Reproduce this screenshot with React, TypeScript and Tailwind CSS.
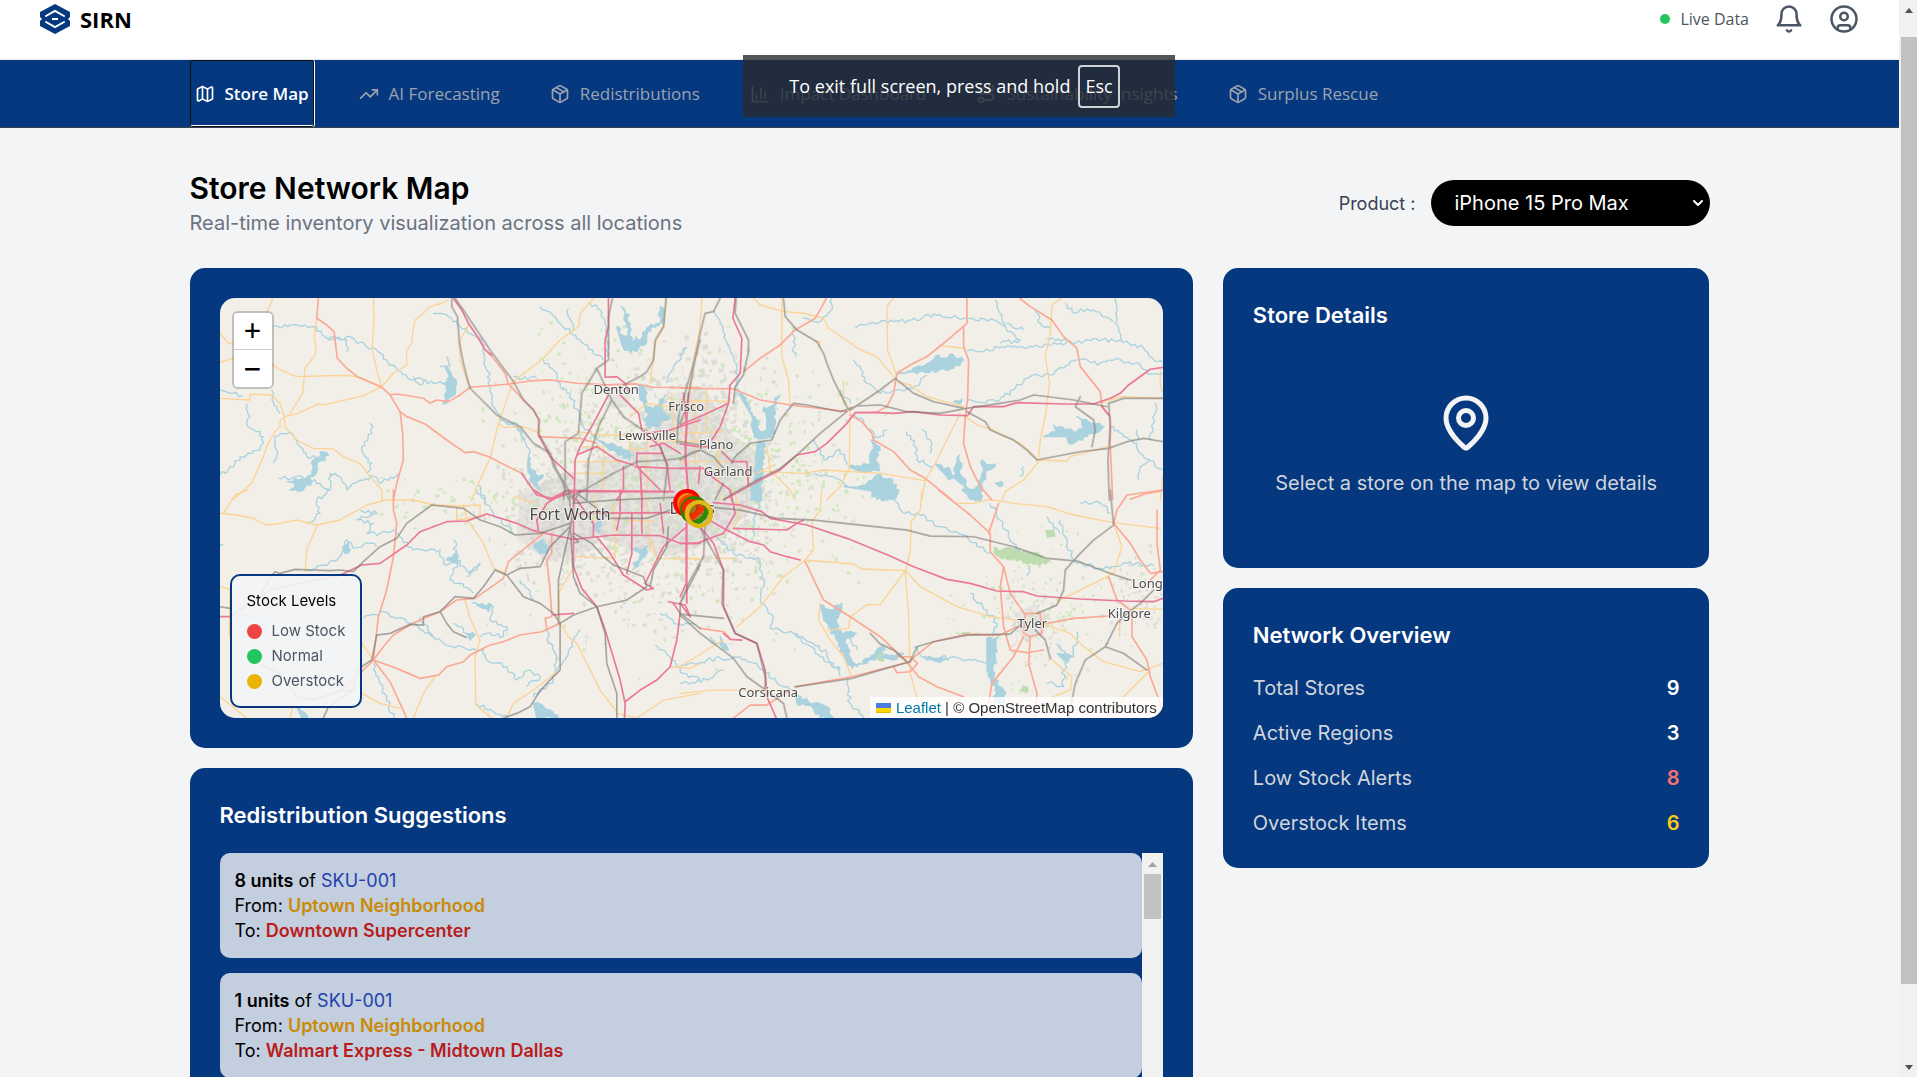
import type { ReactNode } from "react";
import { CircleUser, Map as MapIcon, MapPin, Package, Route, TrendingUp, ChartColumn, ChevronDown } from "lucide-react";

/* ------------------------------------------------------------------ */
/* Map drawing data: each sheet covers one quarter of the map at 3x    */
/* ------------------------------------------------------------------ */

type Sheet = {
  x: number;
  y: number;
  minor: string[];
  trunk: string[];
  motorway: string[];
  rail: string[];
  river: string[];
  lake: string[];
};

const sheets: Sheet[] = [
  {
    x: -40,
    y: -38,
    minor: [
      "278,115 262,155",
      "120,220 145,250 160,252",
      "120,307 160,295",
      "275,312 300,330 350,350 500,346 540,352 605,380",
      "410,175 403,230 408,270 405,285 375,325 368,400 327,466",
      "580,115 582,180 576,265 590,330 605,380",
      "805,120 785,130 750,140 725,165 705,180 698,215 695,250 680,270 680,315 640,340 605,380 550,408 430,435 415,432 350,462 313,470",
      "120,415 210,420 210,403 275,405 300,430 313,470 315,500 350,540 400,565 460,567 490,590 540,610 570,650 605,690 607,720",
      "313,470 300,485 300,500 285,515 260,560 250,590 215,670 160,718",
      "1240,115 1200,160 1195,200 1140,240 1090,295 1000,365 955,490 930,595 890,680 875,720",
      "865,195 840,240 840,300 870,385",
      "955,490 970,502 1030,500 1080,520",
      "1458,115 1450,200 1425,250 1410,370",
      "1190,515 1270,525 1350,525",
      "1205,560 1270,560 1270,690",
      "1190,605 1330,605",
      "1190,640 1270,640",
      "1345,520 1350,570 1400,565 1400,500",
      "1350,470 1400,430 1460,440 1560,425",
      "1400,540 1560,545",
      "1475,400 1480,560",
      "1400,590 1400,690",
    ],
    trunk: [
      "415,115 410,175 440,195 462,215 472,295 500,325 535,352 605,382 630,405 660,455 680,470 735,492 800,540 855,578 880,575 930,592 980,618 1025,640",
      "630,405 650,402 690,408 730,415 750,430 770,420 805,425 840,405 870,382 920,378 985,372 1050,363 1110,360 1190,370 1280,375 1370,372 1420,382 1560,383",
      "660,455 668,520 670,600 650,670 640,720",
      "915,270 940,295 975,340 985,372 1030,420 1060,450 1075,480 1075,525",
      "1075,530 1200,535 1250,550",
    ],
    motorway: [
      "820,115 845,150 865,190 895,235 915,270 935,285",
      "1285,115 1285,200 1275,240 1275,350",
      "1275,352 1310,350 1335,370 1345,395",
      "1285,405 1240,490 1200,560 1185,600 1182,720",
      "1320,405 1375,460 1385,510 1440,560 1460,610 1470,690",
      "1075,525 1110,590 1180,655",
      "1025,640 1045,670 1070,705 1115,715 1160,692 1480,695",
      "1190,585 1250,560 1310,600 1360,615",
      "1370,580 1370,620 1440,690",
      "1330,620 1330,690 1310,720",
      "1365,620 1470,625 1560,625",
      "1370,580 1450,580",
      "1525,400 1515,560 1525,720",
      "1560,480 1470,510 1400,520",
      "1380,620 1385,720",
      "1410,560 1450,550 1500,580",
    ],
    rail: [
      "815,115 815,140 832,170 838,250 850,310 860,350 870,385 950,465 1020,500 1060,550 1110,580 1120,620 1145,660 1165,718",
      "825,115 850,150 870,180 930,270 1000,365 1030,420 1060,450 1078,480 1075,520 1110,580 1130,630 1165,690 1180,718",
      "1297,115 1285,170 1285,300 1250,325 1230,360 1205,400 1195,520 1155,545 1155,680 1150,718",
      "1250,325 1295,420 1255,500 1240,550 1225,600 1220,720",
      "1458,115 1450,200 1425,240 1420,300 1400,335 1380,350 1330,375",
      "1295,420 1330,470 1380,505 1400,510",
      "1165,715 1230,680 1300,640 1370,605 1460,600 1500,595 1560,570",
      "1495,545 1560,555",
      "1560,240 1540,310 1520,380 1495,470 1490,550",
      "1440,560 1462,620 1450,720",
    ],
    river: [
      "280,200 340,195 400,200 440,235 520,235 560,262 590,270 620,300 690,360 730,360 760,370 800,365",
      "440,235 500,240 500,275",
      "760,160 800,165 840,200 905,240 915,300 930,360 935,430 960,480 1010,490 1030,540",
      "120,390 160,400 190,410",
      "200,430 210,470 200,490 250,530 240,570 180,590 160,620 120,645",
      "295,655 350,650 420,670 450,690 450,640 480,650 500,690 540,660 580,650 600,670 655,640",
      "1080,140 1130,180 1200,240 1240,280 1270,300",
      "1165,145 1165,170 1180,215",
      "1230,130 1260,150 1280,200 1280,290",
      "1090,300 1130,340 1140,380 1170,400 1210,500 1240,530",
      "570,490 575,520 545,560 555,590 575,610 560,640",
      "440,575 420,590 380,590 360,560 340,525 310,520 285,530 290,570 280,610",
      "275,390 275,420 290,440 300,460",
      "960,480 1020,510 1040,560 1050,600",
      "895,675 915,720",
      "1000,350 1070,355",
      "1460,370 1480,320 1520,265",
      "780,320 810,318 800,290",
      "700,350 720,375 740,360",
    ],
    lake: [
      "1310,200 1325,225 1345,225 1340,190 1325,140 1335,150 1350,190 1355,245 1385,235 1400,205 1440,190 1440,140 1452,160 1450,190 1420,200 1400,225 1400,245 1375,265 1350,278 1325,255",
      "1375,375 1395,390 1400,440 1420,450 1440,420 1455,405 1445,450 1470,475 1450,480 1435,500 1400,500 1390,480 1405,460 1380,420",
      "795,320 815,345 828,360 826,390 800,430 788,432 798,385 790,370 808,350",
      "1045,590 1055,630 1075,650 1090,645 1070,665 1080,690 1050,655 1042,620",
      "1235,525 1270,545 1300,550 1360,585 1350,600 1290,570",
      "420,575 446,585 410,615 405,645 385,650 395,665 370,690 330,690 355,675 320,665 395,648 400,600 425,595",
    ],
  },
  {
    x: -40,
    y: 192,
    minor: [
      "205,0 165,15 130,70",
      "120,70 170,75 220,85 260,105 300,100 350,90 412,105 480,90 560,45 620,30 700,30 760,45 850,48 900,45 900,80 830,90 830,50",
      "412,105 380,180 375,245",
      "850,45 860,85 910,160 940,235 975,250",
      "120,290 150,298 148,440",
      "855,330 870,385 900,450 885,500 887,640 900,655 935,684",
      "1140,400 1165,440 1190,460 1230,540 1260,600 1310,665",
      "700,684 730,610 765,560",
      "120,620 200,684",
      "330,684 350,600 350,490",
      "540,450 580,510",
      "545,610 600,640 660,655",
      "980,684 1000,640 1060,600 1130,545",
      "1310,670 1370,684 1450,630 1560,610",
      "1140,400 1135,310 1175,240",
      "1415,150 1430,205 1560,207",
      "1470,530 1530,535 1560,520",
      "1300,40 1305,205",
      "1245,0 1245,95",
      "1000,20 1070,40",
      "1190,200 1300,205",
      "1340,90 1420,95",
      "1400,20 1410,180",
    ],
    trunk: [
      "640,0 640,60 650,100 640,200 620,300 595,380 580,510",
      "580,510 540,550 470,610",
      "580,510 630,575 660,640 680,684",
      "580,510 650,535 720,565 775,555 800,530 850,515 870,495 930,465 970,455 1020,435 1085,425 1140,400",
      "580,510 610,470 640,435 690,405 730,385 780,365 830,330 885,325 970,265 985,215 1040,170 1090,130",
      "1115,130 1115,190 1100,210 1108,280 1115,370",
      "1115,380 1095,385 1100,415",
    ],
    motorway: [
      "120,380 150,380 270,300 400,272 470,260 545,225 600,220 680,165 720,125 800,95 860,93 920,72 1010,100 1060,122 1120,135 1180,148 1300,135 1440,137 1500,160 1560,160",
      "1180,0 1180,230 1205,295 1250,350 1275,420 1290,470 1320,570 1335,640 1333,684",
      "1335,635 1380,600 1430,570 1470,530 1490,450 1500,370 1480,340",
      "1115,375 1180,370",
      "1060,0 1110,30 1180,5 1480,5",
      "1190,70 1480,68",
      "1250,140 1290,190 1330,255 1400,300 1420,295 1395,280 1450,170 1520,110",
      "1075,120 1070,90 1100,40 1150,10",
      "1190,30 1240,100 1240,140",
      "1355,70 1355,190 1340,250",
      "1385,0 1385,130",
      "1320,0 1320,70 1310,120",
      "1440,40 1450,130",
      "1520,100 1520,340",
      "1465,335 1515,345 1530,380",
    ],
    rail: [
      "120,350 150,355",
      "240,320 265,270 285,245 300,250 345,238 400,240 450,242 480,240 520,245 555,210 600,170 650,145 680,100 755,45 850,55 900,90 960,110 1005,135 1080,130 1170,100",
      "430,684 445,650 520,600 530,540 575,510 590,435 630,430 690,403 730,405 730,380 780,365 825,320 880,325 910,290 945,240 980,255 1020,235 1080,230 1110,170 1170,110",
      "780,365 800,400 820,425 858,442",
      "945,240 980,255 1030,320 1080,340 1120,370 1140,400 1140,540 1100,580 1075,610 1050,650 1010,670 970,684",
      "1165,0 1175,90 1155,180 1135,270 1135,400",
      "1170,100 1180,260 1200,310 1250,350 1275,430 1280,520 1310,610 1310,684",
      "1180,130 1235,160 1270,200 1300,225 1390,260 1400,290 1340,330 1250,350 1180,375 1140,400",
      "1410,290 1420,240 1460,170 1465,110",
      "1560,225 1500,340 1500,370 1560,415",
      "1190,10 1290,85 1400,85 1470,60",
      "1200,0 1180,40 1300,30 1480,22",
      "1180,140 1195,155 1185,158",
      "240,520 300,550 350,620 400,630 470,605 520,600",
    ],
    river: [
      "540,60 590,70 530,90 580,100 560,130 600,130 640,120 700,180 780,180 790,220 830,220 810,270 840,280 880,310",
      "450,0 410,30 420,70 380,100",
      "890,0 940,70 1000,130",
      "380,240 430,225 480,200 490,180 500,150 520,175 570,160 590,170",
      "820,150 830,190 830,210 870,250 900,220 860,260",
      "550,385 610,365 690,400 760,440 790,460 870,480 910,480 920,510 980,530 1010,570 1050,540 1080,560 1040,590",
      "875,340 940,350 930,390 980,410 970,440 920,430 900,440",
      "580,520 600,580 620,620 640,684",
      "1100,420 1110,460 1130,500 1120,570 1060,620",
      "820,400 860,430 880,440",
      "1425,465 1470,500 1510,550 1560,570",
      "1440,370 1500,405 1545,405",
      "120,165 130,165",
      "1200,420 1130,545",
      "885,640 940,665 985,684",
      "170,370 240,390 260,440",
      "1020,270 1060,330",
      "720,380 760,440",
    ],
    lake: [
      "1360,180 1405,168 1375,230 1358,238 1380,190",
      "1060,640 1110,660 1135,684 1070,684",
      "1060,170 1090,150 1105,180 1080,190",
      "490,180 505,155 510,180 495,190",
      "800,210 830,180 835,220",
      "890,345 935,345 925,365 910,355",
      "350,650 385,684 365,682",
      "1240,110 1260,80 1255,130",
      "860,430 885,435 870,450",
    ],
  },
  {
    x: 460,
    y: -38,
    minor: [
      "220,115 240,135 310,155 370,160 430,175 445,205 490,235 540,270 590,290 615,320 640,350",
      "305,115 305,290 325,360 330,435",
      "638,115 620,140 622,270 640,320 650,350",
      "1145,115 1115,135 1110,220 1095,290 1108,370 1095,470 1080,540 1075,590",
      "785,258 850,265",
      "840,460 800,540 765,610 735,660 725,720",
      "640,365 690,375 740,410 850,440",
      "855,470 890,495 940,510 960,525 1020,550 1075,600 1160,603 1170,590 1285,560",
      "490,365 490,430",
      "510,440 507,625 480,680 440,720",
      "250,635 370,640 430,630 600,640 735,662",
      "1075,605 1030,660 975,695 965,720",
      "1440,330 1440,370 1445,395",
      "1260,430 1320,410 1448,415",
      "0,520 130,515",
      "80,390 80,510",
      "0,420 160,425",
      "0,605 150,605",
      "115,540 120,720",
      "260,560 270,630 330,690 345,720",
      "1448,645 1440,720",
      "40,430 45,600",
      "65,115 60,200 40,300 30,400",
      "400,245 420,245 415,265",
      "230,640 280,615",
    ],
    trunk: [
      "0,385 160,387 240,420 330,435 420,445 500,455",
      "438,115 420,150 405,175 345,210 300,255 240,295 190,335",
      "860,115 860,190 790,250 740,290 690,315 650,340 640,400 620,440 585,458",
      "850,200 850,260 865,300 862,420 855,470 850,550 870,620 900,680 935,720",
      "1018,115 1050,140 1115,180 1150,230 1190,265 1200,320 1260,395 1265,440 1290,470 1290,560 1297,720",
      "510,465 545,485 575,520 580,540 640,575 690,630 735,655 815,720",
      "1350,718 1400,700 1448,692",
    ],
    motorway: [
      "165,115 158,175 185,235 180,340 150,375 145,430 120,500 95,540",
      "0,495 70,465 145,430",
      "130,720 240,660 300,630 350,585 405,575 440,550 470,520 500,490 525,458 580,457 640,460 700,455 780,465 862,467 880,440 970,440 1010,428 1150,432 1240,432 1290,415 1320,400 1345,375 1410,328 1448,322",
      "10,400 20,500 15,600 25,700",
      "0,625 70,625 95,650 150,690 155,720",
      "0,552 50,560 85,560",
      "125,575 155,605 200,605 205,680",
      "60,620 55,670",
      "1265,440 1285,465",
    ],
    rail: [
      "120,115 100,155 75,160 60,220 35,350 20,440 0,490",
      "168,115 165,160 205,240 205,275 190,345 165,380 160,430",
      "310,115 315,170 350,210 410,245 430,280 440,310 460,360 505,450",
      "155,610 165,590 210,550 275,540 300,480 340,430 380,435 480,455 510,445 530,438 600,435 680,455 780,460 860,445 960,430 1020,420 1060,405 1180,420 1280,440",
      "510,450 600,390 645,355 700,400 760,425 850,445",
      "500,455 420,520 350,585 300,625 230,660 130,718",
      "860,455 915,485 930,510 1000,540 1040,570 1070,600 1200,575 1285,565 1340,545 1390,535 1448,545",
      "1200,410 1185,440 1240,480 1245,510 1235,560",
      "1285,430 1290,500 1283,600 1287,720",
      "1285,430 1330,415 1448,415",
      "0,600 30,580 60,570 100,590 130,625",
      "130,670 105,718",
    ],
    river: [
      "525,205 570,190 640,185 720,180 760,162 850,175 940,180 990,215 1020,240 960,250",
      "860,272 900,275 965,260 1040,265 1140,250 1230,242 1320,240 1390,265 1420,300 1448,305",
      "860,420 950,425 1000,390 1050,350 1110,345 1190,300 1260,310 1320,298 1380,315 1400,340 1448,340",
      "1155,130 1175,155 1240,150 1300,185",
      "1305,115 1305,190 1325,240",
      "100,150 120,190 140,250 150,270 170,320 170,400",
      "520,300 540,320 560,370 600,400 700,385 740,345",
      "0,285 20,262",
      "455,115 450,155 420,185 370,175",
      "340,210 345,290",
      "520,460 550,480 585,530",
      "680,515 705,560 710,600 760,620",
      "725,510 750,540 750,580",
      "1290,500 1330,530 1370,550 1380,580 1448,630",
      "1425,430 1420,490 1410,540",
      "1375,660 1380,620 1410,600",
      "945,120 960,160 975,200",
      "980,190 1030,210",
      "1065,150 1080,190 1110,205",
      "400,540 430,600 480,570 500,615",
      "400,640 480,660 500,680",
      "480,390 510,430",
      "1100,235 1160,240",
      "1370,510 1375,540",
      "1020,650 1030,620",
      "570,540 600,530 620,510",
    ],
    lake: [
      "650,342 725,320 765,290 790,295 810,282 850,300 820,325 780,328 740,338 700,335",
      "175,400 205,430 215,470 222,530 275,535 285,480 280,440 300,405 270,440 250,442 260,475 260,510 240,515 228,480 210,460",
      "232,550 255,550 245,600 250,640 245,690 245,720 210,720 215,690 225,640 225,600",
      "505,620 570,612 575,545 600,570 585,600 598,632 540,635",
      "490,680 560,672 590,645 630,655 655,690 640,718 590,718 560,690",
      "765,612 810,630 820,650 838,585 845,650 870,690 890,680 905,640 905,600 920,615 945,612 915,640 895,718 870,718 840,670 800,650",
      "1090,530 1130,515 1120,495 1180,515 1210,500 1190,470 1240,490 1270,500 1220,530 1165,550 1160,530",
      "820,425 845,418 840,432",
      "945,670 965,665 960,680",
    ],
  },
  {
    x: 460,
    y: 192,
    minor: [
      "425,0 420,60 395,95 400,180 375,210 350,230 310,260 240,350 170,410",
      "375,210 520,222 545,237 675,242 640,290 600,343 560,345 510,380 505,415 440,420",
      "725,0 720,60 693,95 690,180 675,250 685,370 688,500 690,550 715,640",
      "675,240 720,290 830,350 930,380 1010,390",
      "420,340 415,390 450,450 490,500 515,560",
      "830,40 880,40 925,28 1000,40 1100,50 1180,75 1300,98 1440,115",
      "1300,100 1325,170 1300,250 1240,280 1130,335",
      "1080,400 1170,430 1210,470 1270,515 1380,545 1448,520",
      "1110,505 1175,560 1170,600 1120,620 1100,684",
      "0,610 100,600 230,600 310,600",
      "1410,540 1330,620 1300,684",
      "0,530 80,480 130,450",
      "100,205 160,205",
      "160,0 180,60 160,120",
      "1318,440 1318,390",
      "0,205 60,205",
      "1355,355 1448,358",
    ],
    trunk: [
      "775,0 870,75 930,130 930,185 970,230 960,290 970,410 990,480 1040,488 1090,480",
      "955,40 925,130",
      "970,230 990,310 1035,375",
      "375,215 430,330 510,380 600,440 675,510 715,560 770,590 850,620",
      "345,590 515,560 630,530 690,515",
      "640,530 650,548 690,545 712,520 690,500 655,500",
      "690,510 760,455 860,433 960,435 1010,410",
      "1100,400 1180,385 1285,378",
      "1035,370 1030,430 1050,440 1085,430 1080,370 1035,370",
      "1030,440 1000,500 935,580 925,640",
      "1050,440 1045,520 1070,610 1065,684",
      "1300,100 1350,160 1380,210 1410,250 1448,245",
      "1430,60 1430,160 1440,240 1410,270",
      "1285,260 1310,330 1350,360",
      "1355,370 1355,440 1400,510 1410,560 1448,660",
      "60,415 130,425 150,445",
      "160,684 210,645 260,645 330,600",
      "1448,0 1340,15 1310,60 1300,100",
    ],
    motorway: [
      "70,80 130,115 210,155 250,165 270,185 320,200 360,210",
      "100,38 180,45 245,65 270,85 380,105 500,145 630,198 700,230 800,268 870,280 950,303 1030,305 1070,318 1200,327 1330,333 1420,335 1448,325",
      "60,110 100,160 130,240 130,350 165,430 230,460 255,540 260,620 288,684",
      "0,160 50,160 130,130 165,70 150,0",
      "160,115 320,120 350,100 370,90",
      "0,320 18,280 18,100",
      "0,340 30,380",
      "130,430 150,448 185,450",
    ],
    rail: [
      "100,52 180,60 290,85 400,90 520,103 680,120 750,138 880,140 1000,170 1100,205 1190,213 1290,250 1350,270",
      "1290,0 1300,105 1240,150 1200,190 1155,240 1150,300 1130,345 1070,370",
      "690,515 710,470 760,455 860,435 990,432 1020,405",
      "570,430 600,462 640,480 680,515",
      "345,590 515,565 600,540 690,515",
      "60,115 130,240 125,340 165,430 230,460 255,560 255,600",
      "75,100 70,200 30,270 0,340",
      "0,372 130,385",
      "0,375 60,430 160,505 200,560 250,595 310,640 320,684",
      "1065,420 1095,450 1110,505",
      "1420,300 1380,340 1340,370 1310,400 1275,470 1215,510 1185,580 1165,684",
      "1275,470 1330,490 1400,540",
    ],
    river: [
      "230,0 240,50 225,80 220,140",
      "110,140 160,190 240,210 250,290 240,330 280,380 270,415 340,430 400,460 440,490 480,560",
      "620,0 660,60 720,75 780,110 850,135 930,190",
      "930,40 960,90 1020,190",
      "1140,90 1160,160 1190,220 1260,235 1340,220 1420,225",
      "700,470 740,510 820,500 920,520",
      "870,310 920,360 950,400 940,440",
      "1190,425 1180,490 1150,540 1150,590 1100,580",
      "0,530 80,510 180,500 250,540 310,590 360,620",
      "500,560 510,640 550,684",
      "1200,40 1260,40 1290,70",
      "0,580 80,570 130,540",
      "340,430 420,500 480,540",
      "1100,80 1140,130",
      "1050,230 1040,260",
      "1130,460 1160,500",
      "90,440 140,480",
      "640,684 690,660",
      "530,480 500,430 530,430",
    ],
    lake: [
      "600,0 655,0 640,25 610,15",
      "210,0 240,0 240,35 220,30",
      "845,0 900,0 900,35 870,20",
      "420,345 450,360 485,340 475,380 470,425 525,430 495,450 510,500 530,530 610,470 615,480 560,520 515,535 490,500 470,450 430,380",
      "920,445 955,440 945,500 940,560 970,600 975,640 940,640 945,600 920,540",
      "345,615 400,640 440,650 460,684 420,684 400,655 350,640",
      "1130,490 1180,500 1155,515",
      "120,440 145,480 125,465",
      "600,500 670,490 640,510",
      "730,500 800,505 770,515",
    ],
  },
];

const parks = [
  "940,170 965,178 1000,175 1040,182 1080,195 1115,220 1060,225 1020,210 980,210 940,190",
  "830,430 905,428 890,437 835,435",
  "590,490 610,485 612,515 592,510",
  "1095,120 1125,115 1125,140 1100,145",
  "1015,600 1045,580 1040,610",
];

const labels: { text: string; x: number; y: number; big?: boolean }[] = [
  { text: "Denton", x: 396, y: 96 },
  { text: "Frisco", x: 466, y: 113 },
  { text: "Lewisville", x: 427, y: 142 },
  { text: "Plano", x: 496, y: 151 },
  { text: "Garland", x: 508, y: 178 },
  { text: "Fort Worth", x: 350, y: 222, big: true },
  { text: "Dallas", x: 472, y: 216, big: true },
  { text: "Tyler", x: 812, y: 330 },
  { text: "Kilgore", x: 909, y: 320 },
  { text: "Long", x: 927, y: 290 },
  { text: "Corsicana", x: 548, y: 399 },
];

function makeRandom(seed: number) {
  let s = seed;
  return () => {
    s = (s * 1664525 + 1013904223) % 4294967296;
    return s / 4294967296;
  };
}

/* Turns a coarse river course into a meandering one. */
function meander(points: string, seed: number) {
  const rnd = makeRandom(seed * 7919 + 13);
  const pts = points.split(" ").map((p) => p.split(",").map(Number));
  const out: string[] = [pts[0].join(",")];
  for (let i = 1; i < pts.length; i++) {
    const [x0, y0] = pts[i - 1];
    const [x1, y1] = pts[i];
    const len = Math.hypot(x1 - x0, y1 - y0);
    const n = Math.max(1, Math.round(len / 9));
    for (let k = 1; k <= n; k++) {
      const t = k / n;
      const a = k === n ? 0 : (rnd() - 0.5) * 13;
      out.push(`${Math.round(x0 + (x1 - x0) * t - ((y1 - y0) / len) * a)},${Math.round(y0 + (y1 - y0) * t + ((x1 - x0) / len) * a)}`);
    }
  }
  return out.join(" ");
}

function speckles(cx: number, cy: number, rx: number, ry: number, count: number, size: number, seed: number) {
  const rnd = makeRandom(seed);
  let d = "";
  for (let i = 0; i < count; i++) {
    const gx = (rnd() + rnd() + rnd() - 1.5) / 1.5;
    const gy = (rnd() + rnd() + rnd() - 1.5) / 1.5;
    const x = Math.round(cx + gx * rx);
    const y = Math.round(cy + gy * ry);
    const w = 1 + Math.round(rnd() * size);
    const h = 1 + Math.round(rnd() * size);
    d += `M${x} ${y}l${w} ${-1}l1 ${h}l${-w} 1z`;
  }
  return d;
}

const urbanPath =
  speckles(345, 215, 90, 80, 420, 4, 11) +
  speckles(465, 195, 120, 110, 800, 4, 12) +
  speckles(470, 130, 90, 110, 400, 4, 13) +
  speckles(430, 210, 200, 190, 450, 3, 14) +
  speckles(812, 325, 50, 45, 90, 2, 15) +
  speckles(915, 300, 50, 60, 100, 2, 16);
const greenPath =
  speckles(440, 190, 240, 210, 420, 3, 21) +
  speckles(250, 205, 120, 40, 70, 3, 22) +
  speckles(560, 170, 100, 130, 160, 3, 23) +
  speckles(820, 310, 120, 110, 130, 2, 24) +
  speckles(360, 110, 90, 110, 90, 3, 25);

function Lines({ set, stroke, width, opacity = 1 }: { set: (s: Sheet) => string[]; stroke: string; width: number; opacity?: number }) {
  return (
    <g fill="none" stroke={stroke} strokeWidth={width} strokeLinejoin="round" strokeLinecap="round" opacity={opacity}>
      {sheets.map((s, i) => (
        <g key={i} transform={`translate(${s.x} ${s.y}) scale(0.33333)`}>
          {set(s).map((p) => (
            <polyline key={p} points={p} />
          ))}
        </g>
      ))}
    </g>
  );
}

function RegionMap() {
  return (
    <svg viewBox="0 0 943 420" preserveAspectRatio="xMidYMid slice" className="block h-full w-full" role="img" aria-label="Map of North Texas">
      <rect width="943" height="420" fill="#f2efe9" />
      <g fill="#dddbd8" opacity="0.55">
        <path d="M300 195l40-18 25 5 18 30-10 40-45 12-32-25z" />
        <path d="M365 165l60-20 30-50 30-5 25 45 30 20-5 50-30 35-55 18-50-10-40-20z" />
        <path d="M385 95l15-8 12 8-5 14-16 2z" />
        <path d="M795 315l18-8 16 12-6 20-22 3z" />
      </g>
      <path d={urbanPath} fill="#d3d1ce" opacity="0.65" />
      <path d={greenPath} fill="#c8e6b4" opacity="0.8" />
      <g transform="translate(460 192) scale(0.33333)" fill="#bfdcb0">
        {parks.map((p, k) => (
          <polygon key={p} points={meander(p, k + 90)} />
        ))}
      </g>
      <g fill="#aad3df" stroke="#aad3df" strokeWidth="4" strokeLinejoin="round">
        {sheets.map((s, i) => (
          <g key={i} transform={`translate(${s.x} ${s.y}) scale(0.33333)`}>
            {s.lake.map((p, k) => (
              <polygon key={p} points={meander(p, k + 40)} />
            ))}
          </g>
        ))}
      </g>
      <g fill="none" stroke="#aad3df" strokeWidth="4" strokeLinejoin="round">
        {sheets.map((s, i) => (
          <g key={i} transform={`translate(${s.x} ${s.y}) scale(0.33333)`}>
            {s.river.map((p, k) => (
              <polyline key={p} points={meander(p, k + 1 + i * 50)} />
            ))}
          </g>
        ))}
      </g>
      <Lines set={(s) => s.minor} stroke="#fbd394" width={4} />
      <Lines set={(s) => s.trunk} stroke="#fba995" width={5} />
      <Lines set={(s) => s.motorway} stroke="#ea7896" width={5} />
      <Lines set={(s) => s.rail} stroke="#77736f" width={5} opacity={0.6} />
      <g fontFamily="'Noto Sans', sans-serif" textAnchor="middle" fill="#4a4a4a" stroke="#ffffff" strokeOpacity="0.6" strokeWidth="2" paintOrder="stroke">
        {labels.map((l) => (
          <text key={l.text} x={l.x} y={l.y} fontSize={l.big ? 16 : 13}>
            {l.text}
          </text>
        ))}
      </g>
      <g strokeWidth="4">
        <circle cx="467" cy="205" r="12" fill="#f08a10" stroke="#ff0000" />
        <circle cx="470" cy="208" r="10" fill="#c87a20" stroke="#f04a00" strokeWidth="3" />
        <circle cx="474" cy="212" r="12" fill="#b8662a" fillOpacity="0.8" stroke="#3a7a00" />
        <circle cx="471" cy="210" r="7" fill="#c07028" stroke="#ff1e00" />
        <circle cx="478" cy="216" r="12" fill="#2a8a00" fillOpacity="0.25" stroke="#e0b81a" strokeWidth="3" />
        <path d="M470 222l14-13" stroke="#ff2a00" strokeWidth="4" />
        <path d="M476 225q10-3 11-14" stroke="#2a8a00" strokeWidth="4" fill="none" />
        <circle cx="479" cy="216" r="12" fill="none" stroke="#e0b81a" />
      </g>
    </svg>
  );
}

/* ------------------------------------------------------------------ */

function Logo() {
  return (
    <svg viewBox="0 0 30 30" className="h-[30px] w-[30px]" aria-hidden="true">
      <path d="M15 0l15 8v5l-2 2 2 2v5l-15 8L0 22v-5l2-2-2-2V8z" fill="#05387f" />
      <path d="M6 12l9-5 9 5M6 18l9 5 9-5" fill="none" stroke="#fff" strokeWidth="2" strokeLinecap="round" />
      <path d="M12 14h6v2h-6z" fill="#fff" />
    </svg>
  );
}

function BellIcon() {
  return (
    <svg viewBox="0 0 24 24" className="h-[30px] w-[30px]" fill="none" stroke="currentColor" strokeWidth="2" strokeLinecap="round" strokeLinejoin="round" aria-hidden="true">
      <path d="M6 8a6 6 0 0 1 12 0c0 7 3 9 3 9H3s3-2 3-9" />
      <path d="M10.3 21a1.94 1.94 0 0 0 3.4 0" />
    </svg>
  );
}

const tabs = [
  { label: "Store Map", icon: MapIcon },
  { label: "AI Forecasting", icon: TrendingUp },
  { label: "Redistributions", icon: Package },
  { label: "Impact Dashboard", icon: ChartColumn },
  { label: "Sustainability Insights", icon: Route },
  { label: "Surplus Rescue", icon: Package },
];

function Card({ title, children }: { title?: string; children: ReactNode }) {
  return (
    <section className="rounded-[15px] bg-[#05387f] p-[30px]">
      {title && <h2 className="mb-5 text-[22px] leading-[35px] font-semibold text-white">{title}</h2>}
      {children}
    </section>
  );
}

const overview = [
  { label: "Total Stores", value: 9, tone: "text-white" },
  { label: "Active Regions", value: 3, tone: "text-white" },
  { label: "Low Stock Alerts", value: 8, tone: "text-[#f87171]" },
  { label: "Overstock Items", value: 6, tone: "text-[#facc15]" },
];

const legend = [
  { label: "Low Stock", dot: "bg-[#ef4444]" },
  { label: "Normal", dot: "bg-[#22c55e]" },
  { label: "Overstock", dot: "bg-[#eab308]" },
];

const suggestions = [
  { units: 8, sku: "SKU-001", from: "Uptown Neighborhood", to: "Downtown Supercenter" },
  { units: 1, sku: "SKU-001", from: "Uptown Neighborhood", to: "Walmart Express - Midtown Dallas" },
];

function StoreMapPanel() {
  return (
    <div className="relative h-[420px] overflow-hidden rounded-[15px]">
      <RegionMap />
      <div className="absolute top-[13px] left-3 flex w-[42px] flex-col overflow-hidden rounded-md border-2 border-black/20 bg-clip-padding font-['DejaVu_Sans_Mono',monospace] text-[28px] leading-none text-black">
        <button type="button" aria-label="Zoom in" className="flex h-[37px] items-center justify-center border-b border-[#ccc] bg-white">
          +
        </button>
        <button type="button" aria-label="Zoom out" className="flex h-[37px] items-center justify-center bg-white">
          −
        </button>
      </div>
      <div className="absolute bottom-[10px] left-[10px] rounded-[10px] border-2 border-[#05387f] bg-[#f3f4f6]/90 p-[15px] text-[15px] leading-5">
        <h3 className="mb-[10px] text-black">Stock Levels</h3>
        <ul className="flex flex-col gap-[5px] text-[#4b5563]">
          {legend.map((l) => (
            <li key={l.label} className="flex items-center gap-[10px]">
              <span className={`size-[15px] rounded-full ${l.dot}`} />
              {l.label}
            </li>
          ))}
        </ul>
      </div>
      <div className="absolute right-0 bottom-0 flex items-center gap-[5px] bg-white/80 px-[6px] font-['Liberation_Sans',Arial,sans-serif] text-[15px] leading-[21px] text-[#333]">
        <svg viewBox="0 0 15 10" className="h-[10px] w-[15px]" aria-hidden="true">
          <path fill="#4c7be1" d="M0 0h15v5H0z" />
          <path fill="#ffd500" d="M0 5h15v4H0z" />
          <path fill="#e0bc00" d="M0 9h15v1H0z" />
        </svg>
        <span>
          <a href="#leaflet" className="text-[#0078a8]">
            Leaflet
          </a>{" "}
          | © OpenStreetMap contributors
        </span>
      </div>
    </div>
  );
}

export default function App() {
  return (
    <div className="flex h-screen overflow-hidden bg-[#f3f4f6] font-['Inter',sans-serif] text-black">
      <div className="min-w-0 flex-1 overflow-hidden">
        <header className="flex items-center justify-between border-b border-[#e5e7eb] bg-white px-10 pt-1 pb-[25px] font-['Open_Sans',sans-serif]">
          <div className="flex items-center gap-[10px]">
            <Logo />
            <h1 className="text-[22px] leading-[30px] font-bold">SIRN</h1>
          </div>
          <div className="flex items-center gap-[25px] text-[#4b5563]">
            <div className="flex items-center gap-[10px]">
              <span className="size-[10px] rounded-full bg-[#22c55e]" />
              <span className="text-[16px] leading-[30px]">Live Data</span>
            </div>
            <button type="button" aria-label="Notifications">
              <BellIcon />
            </button>
            <button type="button" aria-label="Account">
              <CircleUser className="size-[30px]" />
            </button>
          </div>
        </header>

        <nav className="border-b border-[#374151] bg-[#05387f] font-['Open_Sans',sans-serif]">
          <div className="mx-auto flex h-[67px] max-w-[1600px] gap-10 px-10">
            {tabs.map(({ label, icon: Icon }, i) => (
              <button
                key={label}
                type="button"
                className={
                  i === 0
                    ? "flex items-center gap-[10px] rounded-xs px-[5px] text-[17px] font-semibold whitespace-nowrap text-white shadow-[inset_0_-2px_0_#fff,1px_0_0_#fff] outline-1 -outline-offset-1 outline-[#101010]"
                    : "flex items-center gap-[10px] px-[5px] text-[17px] font-medium whitespace-nowrap text-[#9ca3af]"
                }
              >
                <Icon className="size-5 shrink-0" />
                {label}
              </button>
            ))}
          </div>
        </nav>

        <main className="mx-auto max-w-[1600px] px-10 pt-10">
          <div className="mb-[30px] flex items-center justify-between">
            <div>
              <h2 className="text-[30px] leading-10 font-semibold">Store Network Map</h2>
              <p className="text-[20px] leading-[30px] text-[#6b7280]">Real-time inventory visualization across all locations</p>
            </div>
            <div className="flex items-center gap-[15px]">
              <label htmlFor="product" className="text-[18px] text-[#374151]">
                Product :
              </label>
              <div className="relative">
                <select id="product" className="h-[46px] w-[279px] appearance-none rounded-full bg-black pr-10 pl-6 text-[20px] text-white">
                  <option>iPhone 15 Pro Max</option>
                </select>
                <ChevronDown className="pointer-events-none absolute top-[15px] right-1 size-4 text-white" strokeWidth={3} />
              </div>
            </div>
          </div>

          <div className="grid grid-cols-3 items-start gap-[30px]">
            <div className="col-span-2 flex flex-col gap-5">
              <Card>
                <StoreMapPanel />
              </Card>
              <Card title="Redistribution Suggestions">
                <div className="flex h-[320px]">
                  <ul className="flex min-w-0 flex-1 flex-col gap-[15px] overflow-hidden">
                    {suggestions.map((s) => (
                      <li key={s.sku + s.units} className="shrink-0 rounded-[10px] bg-[#c3cedf] p-[15px] text-[18px] leading-[25px]">
                        <p>
                          <strong className="font-semibold">{s.units} units</strong> of <span className="text-[#1e40af]">{s.sku}</span>
                        </p>
                        <p>
                          From: <span className="font-semibold text-[#ca8a04]">{s.from}</span>
                        </p>
                        <p>
                          To: <span className="font-semibold text-[#b91c1c]">{s.to}</span>
                        </p>
                      </li>
                    ))}
                  </ul>
                  <div className="flex w-[21px] flex-col items-center bg-[#f1f1f1]" aria-hidden="true">
                    <svg viewBox="0 0 21 21" className="size-[21px]">
                      <path d="M6 14l4.500-5 4.500 5z" fill="#a3a3a3" />
                    </svg>
                    <div className="h-[45px] w-[17px] bg-[#c1c1c1]" />
                  </div>
                </div>
              </Card>
            </div>

            <div className="flex flex-col gap-5">
              <Card title="Store Details">
                <div className="flex flex-col items-center gap-[15px] py-10">
                  <MapPin className="size-[60px] text-[#f3f4f6]" />
                  <p className="text-[20px] leading-[30px] text-[#d1d5db]">Select a store on the map to view details</p>
                </div>
              </Card>
              <Card title="Network Overview">
                <dl className="flex flex-col gap-[15px] text-[20px] leading-[30px]">
                  {overview.map((o) => (
                    <div key={o.label} className="flex justify-between">
                      <dt className="text-[#d1d5db]">{o.label}</dt>
                      <dd className={`font-semibold ${o.tone}`}>{o.value}</dd>
                    </div>
                  ))}
                </dl>
              </Card>
            </div>
          </div>
        </main>
      </div>

      <div className="flex w-[18px] shrink-0 flex-col items-center bg-[#f1f1f1] pl-[2px]" aria-hidden="true">
        <svg viewBox="0 0 16 37" className="h-[37px] w-4">
          <path d="M4 13l4-5 4 5z" fill="#505050" />
        </svg>
        <div className="w-4 flex-1 bg-[#c1c1c1]" />
        <svg viewBox="0 0 16 93" className="h-[93px] w-4">
          <path d="M4 81l4 5 4-5z" fill="#505050" />
        </svg>
      </div>

      <div className="absolute top-[55px] left-1/2 flex h-[62px] w-[432px] -translate-x-1/2 items-center justify-center gap-[8px] bg-[#282b30]/80 pr-2 font-['Open_Sans',sans-serif] text-[18px] whitespace-nowrap text-white">
        <span>To exit full screen, press and hold</span>
        <kbd className="flex h-[43px] items-center rounded-[4px] border-2 border-[#d0d2d6] px-[5px] font-['Open_Sans',sans-serif]">Esc</kbd>
      </div>
    </div>
  );
}
